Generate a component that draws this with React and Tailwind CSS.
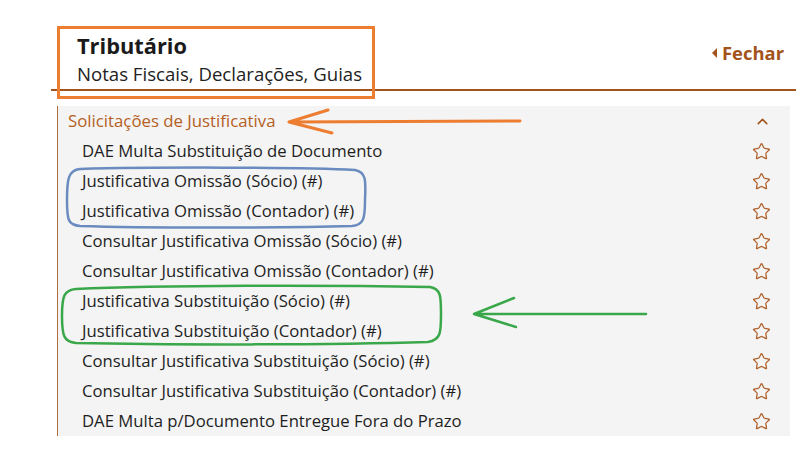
import React from "react";
import { Star, ChevronUp } from "lucide-react";

const items = [
  "DAE Multa Substituição de Documento",
  "Justificativa Omissão (Sócio) (#)",
  "Justificativa Omissão (Contador) (#)",
  "Consultar Justificativa Omissão (Sócio) (#)",
  "Consultar Justificativa Omissão (Contador) (#)",
  "Justificativa Substituição (Sócio) (#)",
  "Justificativa Substituição (Contador) (#)",
  "Consultar Justificativa Substituição (Sócio) (#)",
  "Consultar Justificativa Substituição (Contador) (#)",
  "DAE Multa p/Documento Entregue Fora do Prazo",
];

const Annotations = () => (
  <svg
    className="absolute inset-0 pointer-events-none"
    width="804"
    height="452"
    viewBox="0 0 804 452"
    fill="none"
  >
    {/* orange box round the title */}
    <rect x="58.5" y="27.5" width="315" height="70" stroke="#ed7d31" strokeWidth="3" />
    {/* orange arrow */}
    <path
      d="M520 121 L289 122 M328 110 L289 122 L332 133"
      stroke="#ed7d31"
      strokeWidth="3"
      strokeLinecap="round"
      strokeLinejoin="round"
    />
    {/* blue outline */}
    <path
      d="M80 169 C150 167 300 167 355 170 C366 172 366 180 365 200 C365 218 364 225 352 226 C280 228 140 228 80 226 C68 225 67 220 67 200 C67 180 68 170 80 169 Z"
      stroke="#6a8bbf"
      strokeWidth="2.5"
    />
    {/* green outline */}
    <path
      d="M76 289 C160 285 330 285 430 287 C441 289 441 296 441 314 C441 332 441 340 428 342 C330 345 170 345 76 343 C64 342 62 336 62 316 C62 296 64 290 76 289 Z"
      stroke="#3aa84a"
      strokeWidth="2.5"
    />
    {/* green arrow */}
    <path
      d="M646 314 L474 314 M514 298 L474 314 L516 327"
      stroke="#3aa84a"
      strokeWidth="2.5"
      strokeLinecap="round"
      strokeLinejoin="round"
    />
  </svg>
);

export default function App() {
  return (
    <div
      className="relative w-[804px] h-[452px] bg-white overflow-hidden"
      style={{ fontFamily: '"Open Sans", "Noto Sans", sans-serif' }}
    >
      {/* header */}
      <div className="ml-[51px] w-[745px] h-[91px] border-b-2 border-[#a3531c] flex items-start justify-between">
        <div className="pl-[26px] pt-[32px]">
          <div className="text-[21.8px] leading-[28px] font-bold text-[#1a1a1a]">Tributário</div>
          <div className="text-[18.6px] leading-[28px] text-[#222]">Notas Fiscais, Declarações, Guias</div>
        </div>
        <div className="pt-[39px] pr-[12px] flex items-center gap-[5px] text-[#a3531c]">
          <span className="w-0 h-0 border-y-[5px] border-y-transparent border-r-[5px] border-r-[#a3531c]" />
          <span className="text-[18.4px] leading-[28px] font-bold">Fechar</span>
        </div>
      </div>

      {/* panel */}
      <div className="ml-[57px] mt-[15px] w-[733px] bg-[#f4f4f4] border-l border-[#b0703e]">
        <div className="h-[30px] pl-[10px] pr-[19px] flex items-center justify-between">
          <span className="text-[16.8px] text-[#b5601f]">Solicitações de Justificativa</span>
          <ChevronUp size={17} strokeWidth={2.2} className="text-[#a3531c]" />
        </div>
        {items.map((item) => (
          <div key={item} className="h-[30px] pl-[24px] pr-[19px] flex items-center justify-between">
            <span className="text-[16.7px] text-[#1e1e1e]">{item}</span>
            <Star size={19} strokeWidth={1.6} className="text-[#b0602a]" />
          </div>
        ))}
      </div>

      <Annotations />
    </div>
  );
}
